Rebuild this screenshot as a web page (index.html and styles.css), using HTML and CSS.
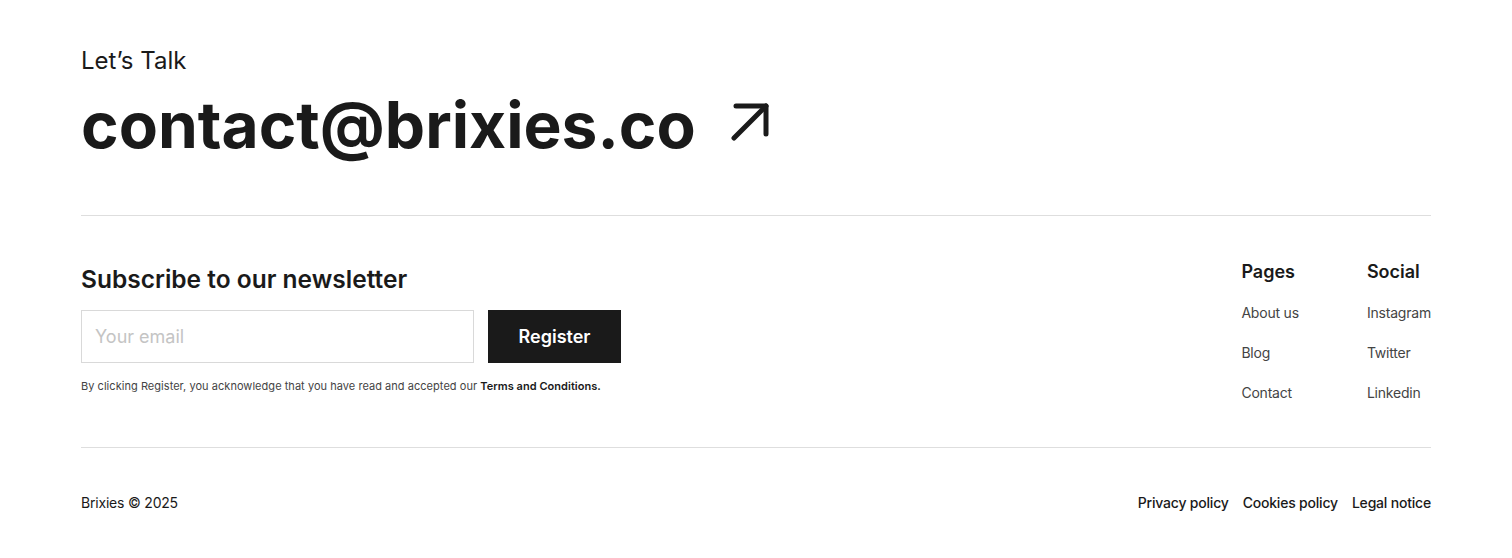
FILE: index.html
```html
<!DOCTYPE html>
<html lang="en">
<head>
<meta charset="UTF-8" />
<meta name="viewport" content="width=device-width, initial-scale=1" />
<title>Brixies - Footer</title>
<link rel="stylesheet" href="styles.css">
</head>
<body>
<footer class="site-footer">
  <section class="talk">
    <p class="talk-label">Let’s Talk</p>
    <a class="talk-mail" href="#">
      <span>contact@brixies.co</span>
      <svg class="talk-arrow" width="40" height="40" viewBox="0 0 40 40" fill="none" stroke="currentColor" stroke-width="5" stroke-linecap="round" stroke-linejoin="round">
        <path d="M4 36 L36 4" />
        <path d="M6 4 H36 V32" />
      </svg>
    </a>
  </section>

  <div class="footer-main">
    <div class="newsletter">
      <h2>Subscribe to our newsletter</h2>
      <form class="newsletter-form" onsubmit="return false">
        <input type="email" placeholder="Your email" />
        <button type="submit" class="btn">Register</button>
      </form>
      <p class="legal-note">By clicking Register, you acknowledge that you have read and accepted our <strong>Terms and Conditions.</strong></p>
    </div>

    <nav class="footer-nav">
      <div class="nav-col">
        <h3>Pages</h3>
        <a href="#">About us</a>
        <a href="#">Blog</a>
        <a href="#">Contact</a>
      </div>
      <div class="nav-col">
        <h3>Social</h3>
        <a href="#">Instagram</a>
        <a href="#">Twitter</a>
        <a href="#">Linkedin</a>
      </div>
    </nav>
  </div>

  <div class="footer-bottom">
    <span>Brixies © 2025</span>
    <div class="policy-links">
      <a href="#">Privacy policy</a>
      <a href="#">Cookies policy</a>
      <a href="#">Legal notice</a>
    </div>
  </div>
</footer>
</body>
</html>
```

FILE: styles.css
```css
body {
  margin: 0;
  font-family: Inter, 'Noto Sans', sans-serif;
  background: #fff;
  color: #1a1a1a;
}
a {
  color: inherit;
  text-decoration: none;
}
.site-footer {
  padding: 0 81px;
}
.talk {
  padding-top: 47px;
  padding-bottom: 55px;
  border-bottom: 1px solid #dedede;
}
.talk-label {
  margin: 0 0 15px;
  font-size: 24px;
  line-height: 28px;
}
.talk-mail {
  display: inline-flex;
  align-items: center;
  gap: 34px;
  font-size: 64px;
  font-weight: 700;
  line-height: 70px;
}
.talk-arrow {
  width: 40px;
  height: 40px;
  margin-top: -6px;
}
.footer-main {
  display: flex;
  justify-content: space-between;
  align-items: flex-start;
  padding: 48px 0 44px;
  border-bottom: 1px solid #dedede;
}
.newsletter h2 {
  margin: 0 0 16px;
  font-size: 24.5px;
  font-weight: 600;
  line-height: 30px;
}
.newsletter-form {
  display: flex;
  gap: 14px;
}
.newsletter-form input {
  width: 393px;
  height: 53px;
  box-sizing: border-box;
  padding: 0 13px;
  border: 1px solid #d9d9d9;
  font-family: inherit;
  font-size: 18px;
  color: #1a1a1a;
  outline: none;
}
.newsletter-form input::placeholder {
  color: #c4c4c4;
}
.btn {
  width: 133px;
  height: 53px;
  border: none;
  background: #1a1a1a;
  color: #fff;
  font-family: inherit;
  font-size: 18px;
  font-weight: 600;
  cursor: pointer;
}
.legal-note {
  margin: 16px 0 0;
  font-size: 11px;
  letter-spacing: 0.04px;
  color: #444;
}
.legal-note strong {
  color: #1a1a1a;
  font-weight: 600;
}
.footer-nav {
  display: flex;
  gap: 68px;
  margin-top: -3px;
}
.nav-col {
  display: flex;
  flex-direction: column;
}
.nav-col h3 {
  margin: 0 0 20px;
  font-size: 18px;
  font-weight: 600;
  line-height: 22px;
}
.nav-col a {
  font-size: 14px;
  line-height: 20px;
  letter-spacing: -0.2px;
  color: #444;
  margin-bottom: 20px;
}
.nav-col a:last-child {
  margin-bottom: 0;
}
.footer-bottom {
  display: flex;
  justify-content: space-between;
  align-items: center;
  padding: 45px 0;
  font-size: 14px;
  line-height: 20px;
  letter-spacing: -0.2px;
}
.policy-links {
  display: flex;
  gap: 14px;
  font-weight: 500;
}
```
